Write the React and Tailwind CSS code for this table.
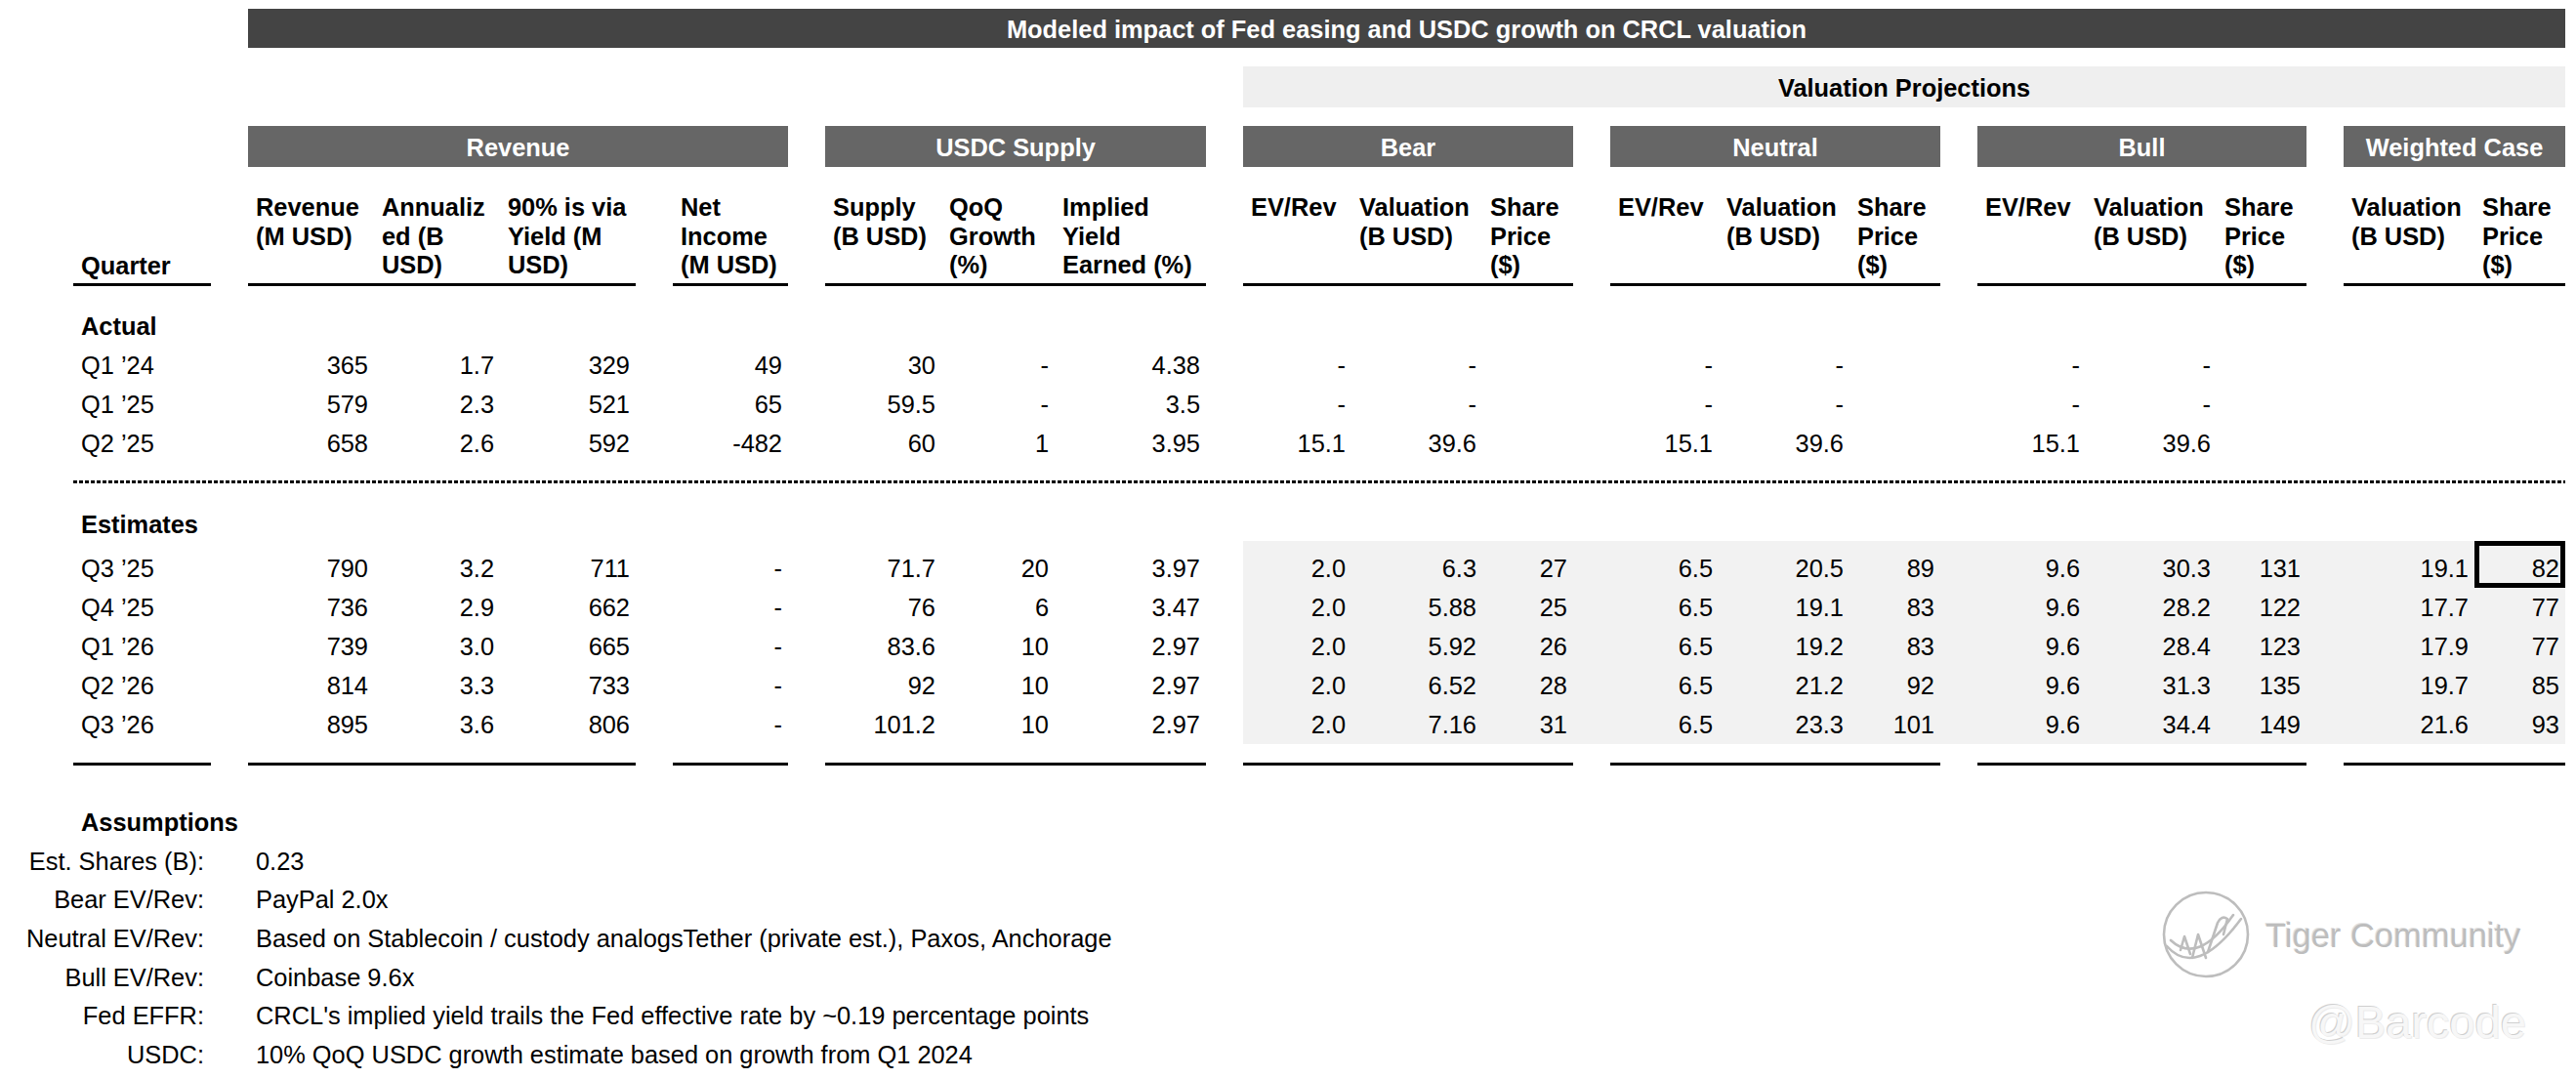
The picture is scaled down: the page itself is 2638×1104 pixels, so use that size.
import React from "react";
import clsx from "clsx";

// same 26-track template for every band of the table (gap tracks are 38px)
const COLS =
  "grid grid-cols-[141px_38px_129px_129px_139px_38px_118px_38px_119px_116px_155px_38px_111px_134px_93px_38px_111px_134px_93px_38px_111px_134px_92px_38px_134px_93px]";

// grid tracks that hold numbers (0-based), in order
const DATA_IDX = [2, 3, 4, 6, 8, 9, 10, 12, 13, 14, 16, 17, 18, 20, 21, 22, 24, 25];

const actual = [
  ["Q1 \u201924", "365", "1.7", "329", "49", "30", "-", "4.38", "-", "-", "", "-", "-", "", "-", "-", "", "", ""],
  ["Q1 \u201925", "579", "2.3", "521", "65", "59.5", "-", "3.5", "-", "-", "", "-", "-", "", "-", "-", "", "", ""],
  ["Q2 \u201925", "658", "2.6", "592", "-482", "60", "1", "3.95", "15.1", "39.6", "", "15.1", "39.6", "", "15.1", "39.6", "", "", ""],
];

const estimates = [
  ["Q3 \u201925", "790", "3.2", "711", "-", "71.7", "20", "3.97", "2.0", "6.3", "27", "6.5", "20.5", "89", "9.6", "30.3", "131", "19.1", "82"],
  ["Q4 \u201925", "736", "2.9", "662", "-", "76", "6", "3.47", "2.0", "5.88", "25", "6.5", "19.1", "83", "9.6", "28.2", "122", "17.7", "77"],
  ["Q1 \u201926", "739", "3.0", "665", "-", "83.6", "10", "2.97", "2.0", "5.92", "26", "6.5", "19.2", "83", "9.6", "28.4", "123", "17.9", "77"],
  ["Q2 \u201926", "814", "3.3", "733", "-", "92", "10", "2.97", "2.0", "6.52", "28", "6.5", "21.2", "92", "9.6", "31.3", "135", "19.7", "85"],
  ["Q3 \u201926", "895", "3.6", "806", "-", "101.2", "10", "2.97", "2.0", "7.16", "31", "6.5", "23.3", "101", "9.6", "34.4", "149", "21.6", "93"],
];

const headers = [
  { col: "col-start-3", lines: ["Revenue", "(M USD)"] },
  { col: "col-start-4", lines: ["Annualiz", "ed (B", "USD)"] },
  { col: "col-start-5", lines: ["90% is via", "Yield (M", "USD)"] },
  { col: "col-start-7", lines: ["Net", "Income", "(M USD)"] },
  { col: "col-start-9", lines: ["Supply", "(B USD)"] },
  { col: "col-start-10", lines: ["QoQ", "Growth", "(%)"] },
  { col: "col-start-11", lines: ["Implied", "Yield", "Earned (%)"] },
  { col: "col-start-13", lines: ["EV/Rev"] },
  { col: "col-start-14", lines: ["Valuation", "(B USD)"] },
  { col: "col-start-15", lines: ["Share", "Price", "($)"] },
  { col: "col-start-17", lines: ["EV/Rev"] },
  { col: "col-start-18", lines: ["Valuation", "(B USD)"] },
  { col: "col-start-19", lines: ["Share", "Price", "($)"] },
  { col: "col-start-21", lines: ["EV/Rev"] },
  { col: "col-start-22", lines: ["Valuation", "(B USD)"] },
  { col: "col-start-23", lines: ["Share", "Price", "($)"] },
  { col: "col-start-25", lines: ["Valuation", "(B USD)"] },
  { col: "col-start-26", lines: ["Share", "Price", "($)"] },
];

const groups = [
  { col: "col-start-3 col-span-5", label: "Revenue" },
  { col: "col-start-9 col-span-3", label: "USDC Supply" },
  { col: "col-start-13 col-span-3", label: "Bear" },
  { col: "col-start-17 col-span-3", label: "Neutral" },
  { col: "col-start-21 col-span-3", label: "Bull" },
  { col: "col-start-25 col-span-2", label: "Weighted Case" },
];

const rules = [
  "col-start-1 col-span-1",
  "col-start-3 col-span-3",
  "col-start-7 col-span-1",
  "col-start-9 col-span-3",
  "col-start-13 col-span-3",
  "col-start-17 col-span-3",
  "col-start-21 col-span-3",
  "col-start-25 col-span-2",
];

const assumptions = [
  ["Est. Shares (B):", "0.23"],
  ["Bear EV/Rev:", "PayPal 2.0x"],
  ["Neutral EV/Rev:", "Based on Stablecoin / custody analogsTether (private est.), Paxos, Anchorage"],
  ["Bull EV/Rev:", "Coinbase 9.6x"],
  ["Fed EFFR:", "CRCL's implied yield trails the Fed effective rate by ~0.19 percentage points"],
  ["USDC:", "10% QoQ USDC growth estimate based on growth from Q1 2024"],
];

function DataRow({ row, est, first }) {
  const cells = Array(26).fill(null);
  cells[0] = row[0];
  row.slice(1).forEach((v, i) => {
    cells[DATA_IDX[i]] = v;
  });

  return (
    <div className={COLS}>
      {cells.map((v, i) => {
        const boxed = est && first && i === 25;
        return (
          <div
            key={i}
            className={clsx(
              "flex items-center",
              first ? "h-[48px] pt-[8px]" : "h-[40px]",
              i === 0 ? "justify-start pl-[8px]" : "justify-end",
              i !== 0 && (boxed ? "pr-[1px]" : "pr-[6px]"),
              est && i >= 12 && "bg-[#f2f2f2]",
              boxed && "border-[5px] border-black"
            )}
          >
            {v}
          </div>
        );
      })}
    </div>
  );
}

function TigerLogo() {
  return (
    <svg width="92" height="92" viewBox="0 0 92 92" fill="none" stroke="#bdbdbd" strokeWidth="2.6" strokeLinecap="round" strokeLinejoin="round">
      <circle cx="46" cy="46" r="43" />
      <path d="M6 58 Q36 92 82 30" />
      <path d="M10 52 Q38 78 74 26" />
      <path d="M20 62 L24 48 L30 66" />
      <path d="M32 70 L38 46 L46 70" />
      <path d="M48 64 L58 34 Q62 26 68 30 L64 46" />
    </svg>
  );
}

export default function App() {
  return (
    <div className="relative w-[2638px] h-[1104px] overflow-hidden bg-white text-black text-[25.4px] font-['Liberation_Sans',Arial,sans-serif]">
      {/* table */}
      <div className="w-[2627px] pl-[75px] pt-[9px]">
        <div className={COLS}>
          <div className="col-start-3 col-span-24 h-[40px] pt-[3px] flex items-center justify-center bg-[#444444] text-white font-bold">
            Modeled impact of Fed easing and USDC growth on CRCL valuation
          </div>
        </div>

        <div className={clsx(COLS, "mt-[19px]")}>
          <div className="col-start-13 col-span-14 h-[42px] pt-[3px] flex items-center justify-center bg-[#efefef] font-bold">
            Valuation Projections
          </div>
        </div>

        <div className={clsx(COLS, "mt-[19px]")}>
          {groups.map((g) => (
            <div key={g.label} className={clsx(g.col, "row-start-1 h-[42px] pt-[3px] flex items-center justify-center bg-[#666666] text-white font-bold")}>
              {g.label}
            </div>
          ))}
        </div>

        {/* column headers */}
        <div className={COLS}>
          <div className="col-start-1 row-start-1 h-[122px] flex flex-col justify-end pl-[8px] pb-[3px] leading-[29.5px] font-bold border-b-[3px] border-black">
            Quarter
          </div>
          {headers.map((h) => (
            <div
              key={h.col}
              className={clsx(h.col, "row-start-1 h-[122px] flex flex-col pl-[8px] pt-[27px] leading-[29.5px] font-bold border-b-[3px] border-black")}
            >
              {h.lines.map((l) => (
                <span key={l} className="whitespace-nowrap">
                  {l}
                </span>
              ))}
            </div>
          ))}
        </div>

        {/* actual */}
        <div className="mt-[21px] h-[40px] flex items-center pl-[8px] font-bold">Actual</div>
        {actual.map((r) => (
          <DataRow key={r[0]} row={r} />
        ))}

        <div className="mt-[18px] h-[3px] bg-[repeating-linear-gradient(90deg,#000_0_4px,transparent_4px_6px)]" />

        {/* estimates */}
        <div className="mt-[23px] h-[36px] pt-[3px] flex items-center pl-[8px] font-bold">Estimates</div>
        {estimates.map((r, i) => (
          <DataRow key={r[0]} row={r} est first={i === 0} />
        ))}

        <div className={clsx(COLS, "mt-[19px]")}>
          {rules.map((c) => (
            <div key={c} className={clsx(c, "row-start-1 h-[3px] bg-black")} />
          ))}
        </div>
      </div>

      {/* assumptions */}
      <div className="mt-[38px]">
        <div className="h-[40px] flex items-center pl-[83px] font-bold">Assumptions</div>
        {assumptions.map(([k, v]) => (
          <div key={k} className="grid grid-cols-[209px_1fr] gap-x-[53px] h-[39.6px] items-center">
            <div className="text-right whitespace-nowrap">{k}</div>
            <div className="whitespace-nowrap">{v}</div>
          </div>
        ))}
      </div>

      {/* watermark */}
      <div className="absolute left-[2213px] top-[911px]">
        <TigerLogo />
      </div>
      <div className="absolute left-[2320px] top-[941px] text-[34.5px] leading-none whitespace-nowrap text-[#bdbdbd] [text-shadow:1px_1px_0_#ffffff,-1px_-1px_0_#e2e2e2]">
        Tiger Community
      </div>
      <div className="absolute left-[2364px] top-[1023px] text-[47px] leading-none whitespace-nowrap text-[#f7f7f7] [text-shadow:-1px_-1px_0_#cfcfcf,1px_1px_0_#ececec]">
        @Barcode
      </div>
    </div>
  );
}
